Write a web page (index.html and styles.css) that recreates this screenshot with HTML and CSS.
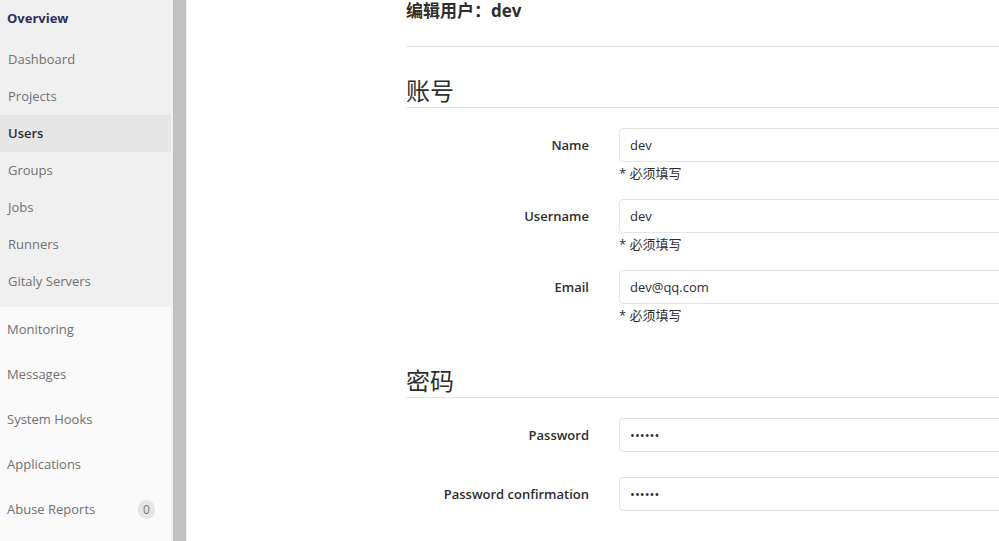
FILE: index.html
```html
<!DOCTYPE html>
<html lang="zh">
<head>
<meta charset="utf-8">
<title>编辑用户：dev</title>
<link rel="stylesheet" href="styles.css">
</head>
<body>
<div class="layout">
  <aside class="sidebar">
    <div class="subnav">
      <div class="nav-head">Overview</div>
      <ul class="subnav-list">
        <li class="sub-item">Dashboard</li>
        <li class="sub-item">Projects</li>
        <li class="sub-item active">Users</li>
        <li class="sub-item">Groups</li>
        <li class="sub-item">Jobs</li>
        <li class="sub-item">Runners</li>
        <li class="sub-item">Gitaly Servers</li>
      </ul>
    </div>
    <ul class="nav-list">
      <li class="nav-item">Monitoring</li>
      <li class="nav-item">Messages</li>
      <li class="nav-item">System Hooks</li>
      <li class="nav-item">Applications</li>
      <li class="nav-item">Abuse Reports <span class="badge">0</span></li>
    </ul>
  </aside>
  <div class="scrollbar"></div>
  <main class="main">
    <div class="content">
      <h3 class="page-title">编辑用户：dev</h3>
      <form class="user-form">
        <section class="section">
          <h4 class="section-title">账号</h4>
          <div class="form-row with-help">
            <label class="form-label">Name</label>
            <div class="field">
              <input class="input" type="text" value="dev">
              <div class="help">* 必须填写</div>
            </div>
          </div>
          <div class="form-row with-help">
            <label class="form-label">Username</label>
            <div class="field">
              <input class="input" type="text" value="dev">
              <div class="help">* 必须填写</div>
            </div>
          </div>
          <div class="form-row with-help">
            <label class="form-label">Email</label>
            <div class="field">
              <input class="input" type="text" value="dev@qq.com">
              <div class="help">* 必须填写</div>
            </div>
          </div>
        </section>
        <section class="section">
          <h4 class="section-title">密码</h4>
          <div class="form-row">
            <label class="form-label">Password</label>
            <div class="field">
              <input class="input" type="password" value="123456">
            </div>
          </div>
          <div class="form-row">
            <label class="form-label">Password confirmation</label>
            <div class="field">
              <input class="input" type="password" value="123456">
            </div>
          </div>
        </section>
      </form>
    </div>
  </main>
</div>
</body>
</html>
```

FILE: styles.css
```css
* { box-sizing: border-box; }
html, body {
  margin: 0;
  padding: 0;
  height: 100%;
  overflow: hidden;
  background: #fff;
}
body {
  font-family: "Open Sans", "Noto Sans CJK SC", sans-serif;
  color: #2e2e2e;
  font-size: 13px;
}
ul { list-style: none; margin: 0; padding: 0; }

.layout {
  display: flex;
  height: 541px;
}

.sidebar {
  width: 173px;
  flex: 0 0 173px;
  background: #fafafa;
  border-right: 2px solid #f0f0f0;
  display: flex;
  flex-direction: column;
}
.subnav {
  background: #f0f0f0;
  margin-right: -2px;
  padding-bottom: 7px;
}
.nav-head {
  height: 41px;
  line-height: 36px;
  padding-left: 7px;
  font-weight: 700;
  color: #2f2f5c;
  font-size: 13px;
}
.sub-item {
  height: 37px;
  line-height: 37px;
  padding-left: 8px;
  color: #707070;
  font-size: 13px;
  margin-right: 2px;
}
.sub-item.active {
  background: #e6e6e6;
  color: #2e2e2e;
  font-weight: 600;
}
.nav-item {
  height: 45px;
  line-height: 45px;
  padding-left: 7px;
  padding-right: 16px;
  color: #707070;
  font-size: 13px;
  display: flex;
  justify-content: space-between;
  align-items: center;
}
.badge {
  display: inline-block;
  width: 17px;
  height: 19px;
  line-height: 19px;
  border-radius: 9px;
  background: #e5e5e5;
  color: #777;
  font-size: 12px;
  text-align: center;
}

.scrollbar {
  flex: 0 0 14px;
  background: #c1c1c1;
  border-right: 1px solid #f0f0f0;
}

.main {
  flex: 1;
  overflow: hidden;
}
.content {
  padding-left: 219px;
  width: 1200px;
}
.page-title {
  margin: 0;
  font-size: 17px;
  font-weight: 700;
  line-height: 22px;
  padding-bottom: 24px;
  border-bottom: 1px solid #e5e5e5;
  color: #2e2e2e;
}
.user-form { margin: 0; }
.section {
  margin: 0;
  padding: 0;
}
.section-title {
  padding: 0;
  margin: 28px 0 20px;
  font-size: 24px;
  line-height: 32px;
  font-weight: 400;
  color: #2e2e2e;
  border-bottom: 1px solid #e5e5e5;
}
.section + .section .section-title { margin-top: 39px; }
.form-row {
  display: grid;
  grid-template-columns: 183px 1fr;
  column-gap: 30px;
  margin-bottom: 25px;
}
.form-row.with-help { margin-bottom: 15px; }
.form-row:last-child { margin-bottom: 0; }
.form-label {
  text-align: right;
  font-weight: 600;
  line-height: 34px;
  font-size: 13px;
  color: #2e2e2e;
}
.input {
  display: block;
  width: 100%;
  height: 34px;
  border: 1px solid #e5e5e5;
  border-radius: 4px;
  padding: 0 10px;
  font-family: "Open Sans", "Noto Sans CJK SC", sans-serif;
  font-size: 13px;
  color: #2e2e2e;
  background: #fff;
  outline: none;
}
.help {
  line-height: 22px;
  font-size: 13px;
  color: #2e2e2e;
}
```
